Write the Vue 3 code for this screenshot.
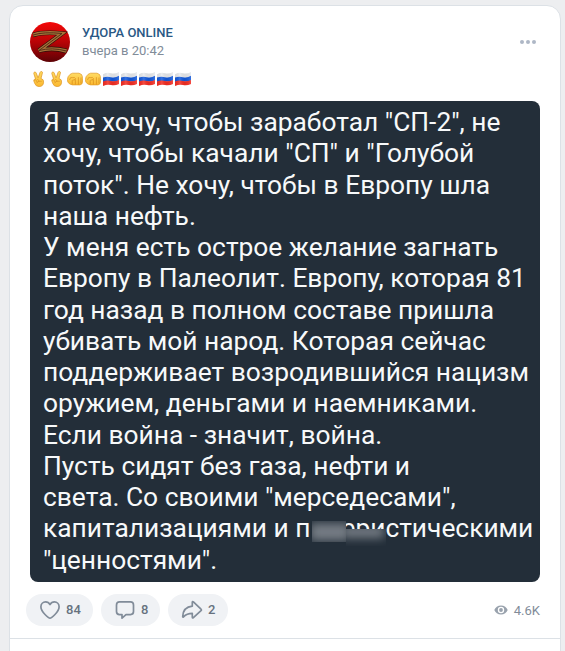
<template>
  <div class="page">
    <article class="post">
      <header class="post-header">
        <svg class="avatar" viewBox="0 0 40 40">
          <defs>
            <linearGradient id="avatarFill" x1="0" y1="0" x2="0" y2="1">
              <stop offset="0" stop-color="#f40808" />
              <stop offset="0.5" stop-color="#b80306" />
              <stop offset="1" stop-color="#5c0205" />
            </linearGradient>
          </defs>
          <circle cx="20" cy="20" r="20" fill="url(#avatarFill)" />
          <g fill="none" stroke-linejoin="miter">
            <path d="M3 13Q14 9.500 32 11.500L9 28.500Q22 25 36.500 29" stroke="#24130b" stroke-width="4.600" />
            <path d="M3 13Q14 9.500 32 11.500L9 28.500Q22 25 36.500 29" stroke="#a87038" stroke-width="3.400" />
            <path d="M3 13Q14 9.500 32 11.500L9 28.500Q22 25 36.500 29" stroke="#4a2a14" stroke-width="0.900" />
          </g>
        </svg>
        <div class="author">
          <a class="name">УДОРА ONLINE</a>
          <span class="date">вчера в 20:42</span>
        </div>
        <svg class="more" viewBox="0 0 16 4">
          <circle v-for="x in [2, 8, 14]" :key="x" :cx="x" cy="2" r="2" fill="#aeb7c6" />
        </svg>
      </header>

      <div class="emojis">
        <svg v-for="(name, i) in emojis" :key="i" class="emoji" viewBox="0 0 16 16">
          <defs v-if="i === 0">
            <linearGradient id="skin" x1="0" y1="0" x2="0" y2="1">
              <stop offset="0" stop-color="#ffdc63" />
              <stop offset="1" stop-color="#fbb82f" />
            </linearGradient>
            <linearGradient id="flagShade" x1="0" y1="0" x2="1" y2="0">
              <stop offset="0" stop-color="#000" stop-opacity="0.06" />
              <stop offset="0.3" stop-color="#fff" stop-opacity="0.15" />
              <stop offset="0.6" stop-color="#000" stop-opacity="0.06" />
              <stop offset="1" stop-color="#fff" stop-opacity="0.15" />
            </linearGradient>
          </defs>
          <g v-if="name === 'victory'" stroke="#dc9422" stroke-width="0.7" stroke-linejoin="round">
            <path d="M4.600 8.200L2.800 2.600Q2.600 1.100 3.900 1Q4.800 1 5.200 2L7.100 6.800L9.100 1.300Q9.700.1 10.700.5Q11.700.9 11.400 2.100L10 7.500Q12.900 8.300 12.600 11.200Q12.200 15.600 8.100 15.600Q4.800 15.500 3.800 12.600L2.700 9.700Q2.700 7.900 4.600 8.200Z" fill="url(#skin)" />
            <path d="M3.200 9.600Q4.300 8 5.300 9.500L6.200 11.500M5.700 9.200Q6.700 7.700 7.700 9.200L8 11M5.600 11.800Q7.600 9.300 10.800 10.300" fill="none" />
          </g>
          <g v-else-if="name === 'fist'" stroke="#e09a25" stroke-width="0.7" stroke-linejoin="round">
            <path d="M.4 8.500Q.5 5.500 3 3.400L5.500 2.200H12L14.500 3.500Q15.500 5 15.500 7.500V11Q15.400 13.600 13 13.900H5.500Q2 13.400.8 11Z" fill="url(#skin)" />
            <path d="M2.500 9Q3.200 5.600 5.300 6.600H7.500Q9.300 7.500 8 8.700L5.500 9.200M5.200 9.300V13.400M8.400 8.500V13.500M11.400 6.200V13.500M14 6.500V12.500" fill="none" stroke="#d18416" stroke-width="0.6" />
          </g>
          <g v-else>
            <path d="M0 3.200Q4 1.200 8 2.200T16 .9V5.400Q12 7.200 8 6.300T0 7.200Z" fill="#e9ebee" />
            <path d="M0 6.600Q4 4.900 8 6.200T16 4.800V9.400Q12 11.200 8 10.300T0 11Z" fill="#1259dc" />
            <path d="M0 10.500Q4 8.900 8 10T16 8.900V13Q12 14.900 8 14T0 15Z" fill="#f52d22" />
            <path d="M0 3.200Q4 1.200 8 2.200T16 .9V13Q12 14.900 8 14T0 15Z" fill="url(#flagShade)" />
          </g>
        </svg>
      </div>

      <div class="picture">
        <p v-for="(line, i) in lines" :key="i" class="line">
          <template v-if="line.censored">{{ line.text }}<span class="censored"></span>{{ line.rest }}</template>
          <template v-else>{{ line.text }}</template>
        </p>
        <span class="smudge left"><i></i></span>
        <span class="smudge right"><i></i></span>
      </div>

      <footer class="actions">
        <button class="action like">
          <svg viewBox="0 0 24 24" class="icon">
            <path d="M12 20.100C10.900 20.100 2.900 14.200 2.900 8.800C2.900 6 5 3.900 7.600 3.900C9.500 3.900 11.100 5 12 6.600C12.900 5 14.500 3.900 16.400 3.900C19 3.900 21.100 6 21.100 8.800C21.100 14.200 13.100 20.100 12 20.100Z" />
          </svg>
          <span>84</span>
        </button>
        <button class="action comment">
          <svg viewBox="0 0 24 24" class="icon">
            <path d="M6.500 3.900H17.500Q20.500 3.900 20.500 6.900V13.600Q20.500 16.600 17.500 16.600H13L9 20.200V16.600H6.500Q3.500 16.600 3.500 13.600V6.900Q3.500 3.900 6.500 3.900Z" />
          </svg>
          <span>8</span>
        </button>
        <button class="action share">
          <svg viewBox="0 0 24 24" class="icon">
            <path d="M12.300 4.200V8.200C6.600 8.800 3 12.600 2.700 18.500Q2.700 19.500 3.500 18.800C6 16.300 8.600 15.400 12.300 15.400V19.200Q12.400 20.400 13.400 19.600L21 12.700Q21.800 11.900 21 11.200L13.400 3.900Q12.400 3.100 12.300 4.200Z" />
          </svg>
          <span>2</span>
        </button>
        <div class="views">
          <svg viewBox="0 0 14 10" class="eye">
            <path fill-rule="evenodd" d="M7 .5C10.200.5 12.700 2.500 13.700 5C12.700 7.500 10.200 9.500 7 9.500S1.300 7.500.3 5C1.300 2.500 3.800.5 7 .5ZM7 1.800A3.200 3.200 0 1 0 7 8.200A3.200 3.200 0 1 0 7 1.800Z" />
            <circle cx="7" cy="5" r="1.900" />
          </svg>
          <span>4.6K</span>
        </div>
      </footer>
    </article>
  </div>
</template>

<script setup>
const emojis = ['victory', 'victory', 'fist', 'fist', 'flag', 'flag', 'flag', 'flag', 'flag']

const lines = [
  { text: 'Я не хочу, чтобы заработал "СП-2", не' },
  { text: 'хочу, чтобы качали "СП" и "Голубой' },
  { text: 'поток". Не хочу, чтобы в Европу шла' },
  { text: 'наша нефть.' },
  { text: 'У меня есть острое желание загнать' },
  { text: 'Европу в Палеолит. Европу, которая 81' },
  { text: 'год назад в полном составе пришла' },
  { text: 'убивать мой народ. Которая сейчас' },
  { text: 'поддерживает возродившийся нацизм' },
  { text: 'оружием, деньгами и наемниками.' },
  { text: 'Если война - значит, война.' },
  { text: 'Пусть сидят без газа, нефти и' },
  { text: 'света. Со своими "мерседесами",' },
  { text: 'капитализациями и п', censored: true, rest: 'еристическими' },
  { text: '"ценностями".' }
]
</script>

<style>
body {
  background: #edeef0;
}
</style>

<style scoped>
.page {
  height: 651px;
  padding: 5px 4px 0 9px;
  box-sizing: border-box;
  overflow: hidden;
  font-family: Roboto, sans-serif;
}

.post {
  height: 660px;
  box-sizing: border-box;
  border: 1px solid #dce1e6;
  border-radius: 14px;
  background: #fff;
}

.post-header {
  display: flex;
  height: 40px;
  padding: 16px 24px 0 20px;
}

.avatar {
  width: 40px;
  height: 40px;
}

.author {
  display: flex;
  flex-direction: column;
  flex: 1;
  margin-left: 12px;
  padding-top: 2px;
}

.name {
  color: #2a5885;
  font-size: 13px;
  font-weight: 500;
  line-height: 18px;
}

.date {
  color: #818c99;
  font-size: 13px;
  line-height: 18px;
}

.more {
  width: 16px;
  height: 4px;
  margin-top: 18px;
}

.emojis {
  display: flex;
  gap: 2px;
  height: 16px;
  margin: 9px 0 0 21px;
}

.emoji {
  width: 16px;
  height: 16px;
}

.picture {
  position: relative;
  box-sizing: border-box;
  width: 510px;
  height: 481px;
  margin: 14px 0 0 20px;
  padding: 6px 0 0 13px;
  overflow: hidden;
  border-radius: 8px;
  background: #232e39;
}

.line {
  height: 31.25px;
  margin: 0;
  color: #f7f9fa;
  font-size: 26.35px;
  line-height: 31.25px;
  white-space: nowrap;
}

.censored {
  display: inline-block;
  width: 31px;
}

/* the smudge sits over the text of the picture */
.smudge {
  position: absolute;
  overflow: hidden;
  background: #232e39;
}

.smudge i {
  position: absolute;
  background: #757c84;
  filter: blur(5px);
}

.smudge.left {
  left: 282px;
  top: 420px;
  width: 34px;
  height: 21px;
}

.smudge.left i {
  inset: 2px -4px 1px -2px;
}

.smudge.right {
  left: 316px;
  top: 428px;
  width: 40px;
  height: 17px;
}

.smudge.right i {
  inset: -3px 2px 8px -5px;
}

.actions {
  display: flex;
  align-items: center;
  height: 32px;
  margin: 12px 0 0;
  padding: 0 20px 12px 16px;
  border-bottom: 1px solid #dce1e6;
}

.action {
  display: flex;
  align-items: center;
  box-sizing: border-box;
  height: 32px;
  margin: 0 8px 0 0;
  padding: 0 12px;
  border: 0;
  border-radius: 16px;
  background: #f0f2f5;
  color: #67727f;
  font-family: inherit;
  font-size: 13px;
  font-weight: 500;
}

.action span {
  margin-top: -1px;
}

.like {
  width: 67px;
}

.comment {
  width: 59px;
}

.share {
  width: 60px;
}

.icon {
  flex: none;
  width: 24px;
  height: 24px;
  margin-right: 4px;
  fill: none;
  stroke: #818c99;
  stroke-width: 1.7;
  stroke-linejoin: round;
}

.views {
  display: flex;
  align-items: center;
  margin-left: auto;
  color: #818c99;
  font-size: 13px;
}

.eye {
  width: 14px;
  height: 10px;
  margin-right: 6px;
  fill: #99a2ad;
}
</style>
